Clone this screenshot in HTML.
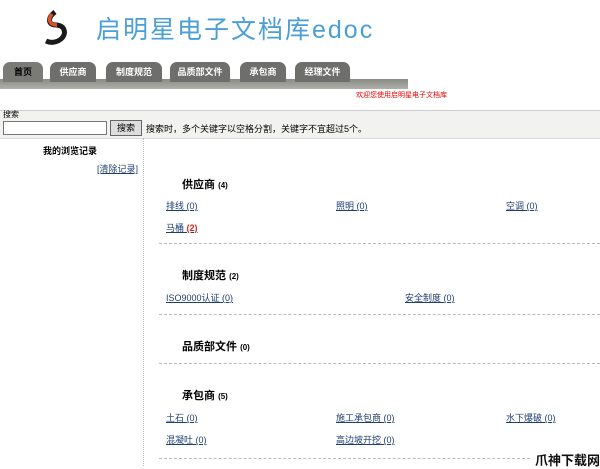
<!DOCTYPE html>
<html><head><meta charset="utf-8"><style>
body{margin:0;width:600px;height:466px;background:#fff;position:relative;overflow:hidden;font-family:"Liberation Sans","Noto Sans CJK SC",sans-serif;font-size:9px;color:#000}
.a{position:absolute;white-space:nowrap}
.tab{position:absolute;top:62px;height:20px;background:#6e6e6c;border-radius:7px 7px 0 0;color:#fff;font-size:9px;font-weight:bold;text-align:center;line-height:20px}
.l{color:#1f3f6f;text-decoration:underline;font-size:9px}
.h{font-weight:bold;font-size:11px}
.sep{position:absolute;left:159px;right:0;border-top:1px dashed #bbb}
</style></head><body>
<svg class="a" style="left:42px;top:10px" width="30" height="36" viewBox="0 0 30 36">
<path d="M13 2 C5 8 6 15 14 15 C23 15 25 24 19 29 C14 33 8 33 4 31" fill="none" stroke="#1a1a1a" stroke-width="5"/>
<path d="M10 4 C5 10 8 15 15 15" fill="none" stroke="#e2502a" stroke-width="3.5"/>
</svg>
<div class="a" style="left:96px;top:10px;font-size:25px;color:#4a9fd6;letter-spacing:2px">启明星电子文档库edoc</div>
<div class="a" style="left:0;top:79px;width:408px;height:10px;background:linear-gradient(#8a8a86,#b0b0aa)"></div>
<div class="tab" style="left:3px;width:40px;color:#000;background:#7a7a76">首页</div>
<div class="tab" style="left:50px;width:46px">供应商</div>
<div class="tab" style="left:106px;width:56px">制度规范</div>
<div class="tab" style="left:170px;width:60px">品质部文件</div>
<div class="tab" style="left:240px;width:46px">承包商</div>
<div class="tab" style="left:295px;width:55px">经理文件</div>
<div class="a" style="left:356px;top:90px;color:#e00;font-size:7px">欢迎您使用启明星电子文档库</div>
<div class="a" style="left:0;top:110px;width:600px;height:27px;background:#f2f2f0;border-top:1px solid #ccc;border-bottom:1px solid #ddd"></div>
<div class="a" style="left:3px;top:109px;font-size:8px">搜索</div>
<div class="a" style="left:3px;top:121px;width:102px;height:12px;background:#fff;border:1px solid #777"></div>
<div class="a" style="left:110px;top:120px;width:30px;height:14px;background:#ddd;border:1px solid #666;text-align:center;line-height:14px">搜索</div>
<div class="a" style="left:146px;top:122px">搜索时，多个关键字以空格分割，关键字不宜超过5个。</div>
<div class="a" style="left:143px;top:138px;width:1px;height:328px;border-left:1px dotted #bbb"></div>
<div class="a" style="left:43px;top:144px;font-weight:bold">我的浏览记录</div>
<div class="a l" style="left:97px;top:162px">[清除记录]</div>
<div class="a h" style="left:182px;top:176px">供应商 <span style="font-size:8px">(4)</span></div>
<div class="a l" style="left:166px;top:199px">排线 (0)</div>
<div class="a l" style="left:336px;top:199px">照明 (0)</div>
<div class="a l" style="left:506px;top:199px">空调 (0)</div>
<div class="a l" style="left:166px;top:221px">马桶 <b style="color:#d22">(2)</b></div>
<div class="sep" style="top:243px"></div>
<div class="a h" style="left:182px;top:267px">制度规范 <span style="font-size:8px">(2)</span></div>
<div class="a l" style="left:166px;top:291px">ISO9000认证 (0)</div>
<div class="a l" style="left:405px;top:291px">安全制度 (0)</div>
<div class="sep" style="top:314px"></div>
<div class="a h" style="left:182px;top:338px">品质部文件 <span style="font-size:8px">(0)</span></div>
<div class="sep" style="top:363px"></div>
<div class="a h" style="left:182px;top:387px">承包商 <span style="font-size:8px">(5)</span></div>
<div class="a l" style="left:166px;top:411px">土石 (0)</div>
<div class="a l" style="left:336px;top:411px">施工承包商 (0)</div>
<div class="a l" style="left:506px;top:411px">水下爆破 (0)</div>
<div class="a l" style="left:166px;top:433px">混凝吐 (0)</div>
<div class="a l" style="left:336px;top:433px">高边坡开挖 (0)</div>
<div class="sep" style="top:458px;right:70px"></div>
<div class="a" style="left:535px;top:450px;font-size:13px;font-weight:bold;color:#111">爪神下载网</div>
</body></html>
